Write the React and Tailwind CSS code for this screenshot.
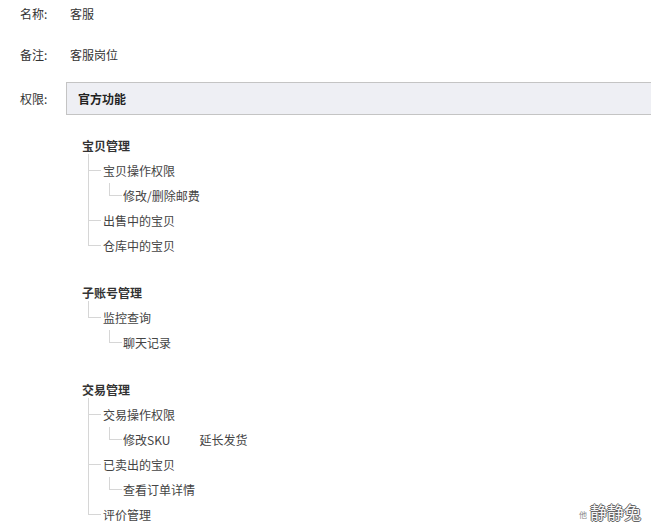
const font = { fontFamily: '"Noto Sans CJK SC", "Noto Sans", sans-serif' };

const groups = [
  {
    title: "宝贝管理",
    items: [
      { label: "宝贝操作权限", children: [["修改/删除邮费"]] },
      { label: "出售中的宝贝" },
      { label: "仓库中的宝贝" },
    ],
  },
  {
    title: "子账号管理",
    items: [{ label: "监控查询", children: [["聊天记录"]] }],
  },
  {
    title: "交易管理",
    items: [
      { label: "交易操作权限", children: [["修改SKU", "延长发货"]] },
      { label: "已卖出的宝贝", children: [["查看订单详情"]] },
      { label: "评价管理" },
    ],
  },
];

function Branch({ first, last, children, textPad }) {
  let v = "top-0 bottom-0";
  if (first && last) v = "-top-1 h-[17px]";
  else if (first) v = "-top-1 bottom-0";
  else if (last) v = "top-0 h-[13px]";
  return (
    <div className="relative">
      <span className={`absolute left-0 w-px bg-[#d6d6d6] ${v}`}></span>
      <span className="absolute left-0 top-[12px] w-[13px] h-px bg-[#d6d6d6]"></span>
      <div className={textPad}>{children}</div>
    </div>
  );
}

function Group({ group }) {
  return (
    <div className="flex flex-col">
      <div className="h-[25px] flex items-center font-bold text-[#333]">
        {group.title}
      </div>
      <div className="ml-[6px] flex flex-col">
        {group.items.map((item, i) => (
          <Branch
            key={item.label}
            first={i === 0}
            last={i === group.items.length - 1}
            textPad="pl-[15px]"
          >
            <div className="h-[25px] flex items-center">{item.label}</div>
            {item.children && (
              <div className="ml-[6px] flex flex-col">
                {item.children.map((row, j) => (
                  <Branch
                    key={j}
                    first={false}
                    last={j === item.children.length - 1}
                    textPad="pl-[14px]"
                  >
                    <div className="h-[25px] flex items-center gap-[29px]">
                      {row.map((t) => (
                        <span key={t}>{t}</span>
                      ))}
                    </div>
                  </Branch>
                ))}
              </div>
            )}
          </Branch>
        ))}
      </div>
    </div>
  );
}

export default function App() {
  return (
    <div
      className="w-[651px] h-[528px] overflow-hidden bg-white text-[12px] text-[#333] relative"
      style={font}
    >
      <div className="flex items-center h-[28px] pl-[20px]">
        <span className="w-[50px]">名称:</span>
        <span>客服</span>
      </div>
      <div className="flex items-center h-[28px] mt-[13px] pl-[20px]">
        <span className="w-[50px]">备注:</span>
        <span>客服岗位</span>
      </div>
      <div className="flex items-center mt-[13px] pl-[20px]">
        <span className="w-[46px]">权限:</span>
        <div className="flex-1 h-[33px] flex items-center pl-[11px] bg-[#eeeff4] border border-r-0 border-[#c4c4c4] font-bold text-[#222]">
          官方功能
        </div>
      </div>
      <div className="pl-[82px] pt-[18px] flex flex-col gap-[22px] text-[#444]">
        {groups.map((g) => (
          <Group key={g.title} group={g} />
        ))}
      </div>
      <div className="absolute right-[10px] bottom-[8px] flex items-end gap-[3px]">
        <span className="text-[8px] text-[#888] leading-none mb-[1px]">他</span>
        <span
          className="text-[17px] leading-none text-[#f6f6f6]"
          style={{
            textShadow:
              "1px 0 0 #666, -1px 0 0 #666, 0 1px 0 #666, 0 -1px 0 #666",
          }}
        >
          静静兔
        </span>
      </div>
    </div>
  );
}
